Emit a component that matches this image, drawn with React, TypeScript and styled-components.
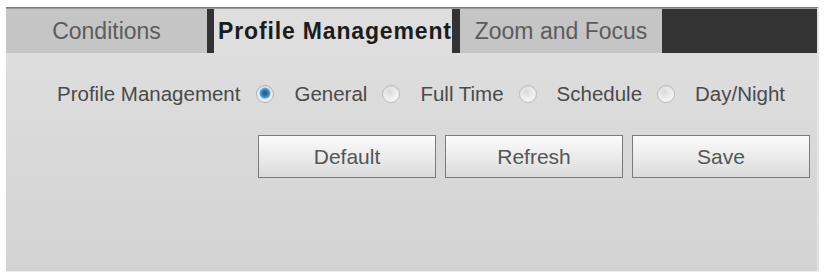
import React, { useState } from "react";
import styled, { createGlobalStyle } from "styled-components";

const GlobalStyle = createGlobalStyle`
  html, body {
    margin: 0;
    padding: 0;
    background: #ffffff;
  }
  body {
    font-family: "Liberation Sans", Arial, sans-serif;
  }
`;

const Page = styled.div`
  padding: 7px 0 0 6px;
  width: 826px;
  height: 278px;
  box-sizing: border-box;
`;

const Panel = styled.div`
  width: 813px;
  height: 265px;
  box-sizing: border-box;
  border-top: 1px solid #7a7a7a;
  border-right: 2px solid #e4e4e4;
  border-bottom: 1px solid #ececec;
  background: linear-gradient(#e0e0e0, #d3d3d3);
  display: flex;
  flex-direction: column;
`;

const TabBar = styled.div`
  display: flex;
  height: 44px;
  border-top: 1px solid #9a9a9a;
`;

const Tab = styled.div<{ $w: number; $active?: boolean }>`
  width: ${(p) => p.$w}px;
  flex: none;
  box-sizing: border-box;
  display: flex;
  align-items: center;
  font-size: 23px;
  white-space: nowrap;
  overflow: visible;
  cursor: pointer;
  ${(p) =>
    p.$active
      ? `
    background: #dedede;
    color: #1c1c1c;
    font-weight: bold;
    border-left: 7px solid #333;
    border-right: 8px solid #333;
    padding-left: 4px;
    letter-spacing: 0.85px;
  `
      : `
    background: #c5c5c5;
    color: #5c5c5c;
    justify-content: center;
  `}
`;

const TabFiller = styled.div`
  flex: 1;
  background: #333333;
`;

const Body = styled.div`
  flex: 1;
  padding: 26px 0 0 51px;
`;

const Row = styled.div`
  display: flex;
  align-items: center;
  height: 30px;
  font-size: 20.5px;
  color: #4a4a4a;
`;

const Label = styled.span`
  margin-right: 16px;
`;

const Option = styled.label`
  display: flex;
  align-items: center;
  margin-right: 15px;
  cursor: pointer;
`;

const Radio = styled.span<{ $on: boolean }>`
  width: 18px;
  height: 18px;
  border-radius: 50%;
  box-sizing: border-box;
  margin-right: 20px;
  border: 1px solid ${(p) => (p.$on ? "#a9b4be" : "#bdbdbd")};
  background: ${(p) =>
    p.$on
      ? "radial-gradient(circle at 50% 45%, #1a5b8e 0, #2c77b0 3px, #6ea6cf 5px, #e3ebf2 6px, #f2f2f2 9px)"
      : "radial-gradient(circle at 40% 35%, #d8d8d8 0, #e6e6e6 4px, #f3f3f3 9px)"};
  box-shadow: inset 0 1px 1px rgba(0, 0, 0, 0.08);
`;

const Buttons = styled.div`
  display: flex;
  gap: 9px;
  margin: 26px 0 0 201px;
`;

const Button = styled.button`
  width: 178px;
  height: 43px;
  border: 1px solid #7b7b7b;
  background: linear-gradient(#fbfbfb, #ececec 50%, #dadada);
  font-family: "Liberation Sans", Arial, sans-serif;
  font-size: 21px;
  color: #555555;
  cursor: pointer;
  padding: 0;
`;

const options = ["General", "Full Time", "Schedule", "Day/Night"];

export default function App() {
  const [mode, setMode] = useState("General");

  return (
    <>
      <GlobalStyle />
      <Page>
        <Panel>
          <TabBar>
            <Tab $w={201}>Conditions</Tab>
            <Tab $w={253} $active>
              Profile Management
            </Tab>
            <Tab $w={202}>Zoom and Focus</Tab>
            <TabFiller />
          </TabBar>
          <Body>
            <Row>
              <Label>Profile Management</Label>
              {options.map((o) => (
                <Option key={o} onClick={() => setMode(o)}>
                  <Radio $on={mode === o} />
                  {o}
                </Option>
              ))}
            </Row>
            <Buttons>
              <Button>Default</Button>
              <Button>Refresh</Button>
              <Button>Save</Button>
            </Buttons>
          </Body>
        </Panel>
      </Page>
    </>
  );
}
